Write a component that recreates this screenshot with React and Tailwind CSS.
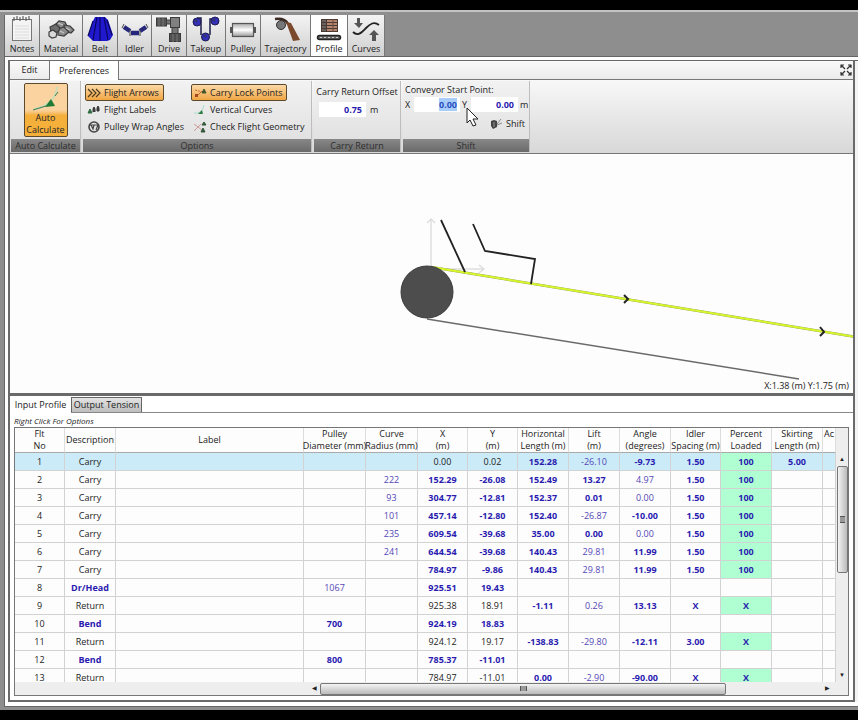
import React, { useEffect, useRef, useState } from "react";
import clsx from "clsx";

const NotesIcon = () => (
    <svg width="28" height="28" viewBox="0 0 28 28">
        <rect x="4.500" y="4.500" width="19" height="21" fill="#f4f4f4" stroke="#777" />
        <path d="M6 2v4M9 1v4M12 2v4M15 1v4M18 2v4M21 1v4" stroke="#444" />
        <path d="M7 11h14M7 14h14M7 17h14M7 20h14M7 23h14" stroke="#dcdcdc" />
    </svg>
);

const MaterialIcon = () => (
    <svg width="28" height="28" viewBox="0 0 28 28" fill="#8a8a8a" stroke="#3d3d3d" strokeWidth="1.200">
        <path d="M8 10l4-4 6 1 2 4-5 4-6-1z" />
        <path d="M17 10l6 1 4 4-3 3-7-2z" />
        <path d="M11 14l6-2 5 5-5 4-6-1z" />
        <path d="M3 12l6-3 4 4-2 4-7 0z" fill="#6e6e6e" />
        <path d="M2 17l4-2 4 3-1 4-4 1-3-2z" fill="#d8d8d8" />
        <path d="M11 8l5 2M19 13l4 2M13 16l4 2" stroke="#c8c8c8" />
    </svg>
);

const BeltIcon = () => (
    <svg width="28" height="28" viewBox="0 0 28 28">
        <path d="M9 2h10l3 3 5 15-3 5-3 1H7l-5-5L7 6z" fill="#1f18cc" />
        <path d="M11 2L7 25M14 2v24M18 2l4 23M7 6L2 21M21 5l5 15" stroke="#0a075e" strokeWidth="1.200" fill="none" />
    </svg>
);

const IdlerIcon = () => (
    <svg width="28" height="28" viewBox="0 0 28 28">
        <path d="M3 12l6 4M10 18h8M19 16l6-4" stroke="#26267a" strokeWidth="4.500" />
        <path d="M1 13l2-4M9 15v6M19 15v6M25 9l2 4" stroke="#444" />
    </svg>
);

const DriveIcon = () => (
    <svg width="28" height="28" viewBox="0 0 28 28" stroke="#3b3b3b">
        <rect x="1.500" y="3" width="10" height="8" fill="#555" />
        <rect x="11.500" y="5" width="5" height="4" fill="#777" />
        <rect x="15.500" y="2.500" width="9" height="10" fill="#808080" />
        <rect x="17" y="12.500" width="6" height="6" fill="#777" />
        <rect x="14.500" y="18.500" width="11" height="8" fill="#505050" />
        <path d="M4 3v8M8 3v8M18 19v8M22 19v8" stroke="#777" />
    </svg>
);

const TakeupIcon = () => (
    <svg width="28" height="28" viewBox="0 0 28 28" stroke="#1d1d50">
        <path d="M5 3h4v17M18 20V4h6" fill="none" strokeWidth="1.500" />
        <circle cx="5" cy="7" r="4" fill="#3430b8" />
        <circle cx="23" cy="6" r="4" fill="#3430b8" />
        <circle cx="13.500" cy="22" r="4" fill="#3430b8" />
        <circle cx="4" cy="6" r="1" fill="#aab" />
        <circle cx="22" cy="5" r="1" fill="#aab" />
        <circle cx="13" cy="21" r="1" fill="#aab" />
    </svg>
);

const PulleyIcon = () => (
    <svg width="28" height="28" viewBox="0 0 28 28">
        <defs>
            <linearGradient id="drum" x2="0" y2="1">
                <stop stopColor="#aaa" />
                <stop offset="0.500" stopColor="#fff" />
                <stop offset="1" stopColor="#999" />
            </linearGradient>
        </defs>
        <path d="M1 12h26v6H1z" fill="#555" />
        <rect x="3.500" y="8.500" width="21" height="13" fill="url(#drum)" stroke="#555" strokeWidth="1.200" />
    </svg>
);

const TrajectoryIcon = () => (
    <svg width="28" height="28" viewBox="0 0 28 28">
        <path d="M3 4c7-1 11 1 13 5" fill="none" stroke="#3c2a22" strokeWidth="2.500" />
        <path d="M14 7l5 1 9 17-7 1z" fill="#7b4a2c" />
        <circle cx="9" cy="10" r="4.500" fill="#777" stroke="#333" />
    </svg>
);

const ProfileIcon = () => (
    <svg width="28" height="28" viewBox="0 0 28 28">
        <rect x="6" y="4" width="17" height="13" fill="#4a3a34" />
        <path d="M12 6h10M12 9h10M12 12h10M12 15h10" stroke="#d9a080" strokeWidth="1.500" />
        <path d="M7 6h4M7 9h4M7 12h4M7 15h4" stroke="#8a8a8a" />
        <path d="M18 4v13" stroke="#6a4a3a" />
        <rect x="2.500" y="20.500" width="23" height="4" rx="2" fill="#666" stroke="#222" strokeWidth="1.500" />
        <path d="M5 22.500h18" stroke="#ccc" strokeDasharray="2 2" />
    </svg>
);

const CurvesIcon = () => (
    <svg width="28" height="28" viewBox="0 0 28 28">
        <path d="M1 17c5 5 9 0 13-4s8-7 13-3" fill="none" stroke="#222" strokeWidth="1.800" />
        <path d="M5 3h3v5h3l-4 5-5-5h3z" fill="#555" />
        <path d="M20 26h4v-6h3l-5-5-5 5h3z" fill="#555" />
    </svg>
);

const ArrowsIcon = () => (
    <svg width="15" height="12" viewBox="0 0 15 12" fill="none" stroke="#4c3a1c" strokeWidth="1.200">
        <path d="M1 2l4 4-4 4M5 2l4 4-4 4M9 2l4 4-4 4" />
    </svg>
);

const LabelsIcon = () => (
    <svg width="15" height="12" viewBox="0 0 15 12">
        <path d="M1 9l2-4 2 4z" fill="#2c6b3c" stroke="#2c6b3c" />
        <path d="M6 8V5l1-2 1 2v3M10 7V4l1-2 1 2v3z" fill="#444" stroke="#333" />
    </svg>
);

const WrapIcon = () => (
    <svg width="15" height="12" viewBox="0 0 15 12" fill="none" stroke="#444">
        <circle cx="7" cy="6" r="5" strokeWidth="1.600" />
        <path d="M4 4l2 4 1-4M8 4h3l-2 5M3 4h8" strokeWidth="1.200" />
    </svg>
);

const LockIcon = () => (
    <svg width="15" height="12" viewBox="0 0 15 12">
        <path d="M2 3l8 2" stroke="#c06a3a" strokeDasharray="2 1" />
        <rect x="2" y="7" width="3" height="3" fill="#a34a22" />
        <path d="M5 8l4-4" stroke="#c06a3a" />
        <path d="M9 6l2-4 2 4z" fill="#41562c" stroke="#41562c" />
    </svg>
);

const VerticalCurvesIcon = () => (
    <svg width="15" height="12" viewBox="0 0 15 12">
        <path d="M1 9c5 1 9-2 10-8" fill="none" stroke="#a9dccb" />
        <path d="M5 10l4-4 1 4z" fill="#2f7d4b" />
    </svg>
);

const GeometryIcon = () => (
    <svg width="15" height="12" viewBox="0 0 15 12">
        <path d="M1 10l7-7M1 3l8 6" stroke="#d09a9a" />
        <path d="M9 4l2-3 2 3zM8 11l2-4 2 4z" fill="#35593d" stroke="#35593d" />
    </svg>
);

const ShiftIcon = () => (
    <svg width="13" height="12" viewBox="0 0 13 12">
        <path d="M1 3l3-1 3 1v6l-4 2-2-3z" fill="#444" />
        <path d="M7 6l4-5M7 7l5-2" stroke="#888" />
        <path d="M4 4v5" stroke="#999" />
    </svg>
);

const CalculateIcon = () => (
    <svg width="40" height="28" viewBox="0 0 40 28">
        <path d="M8 25c12-2 22-9 23-22" fill="none" stroke="#c9dcb4" strokeWidth="2" />
        <path d="M7 26l13-4M29 12l3-4" stroke="#3f7a50" />
        <path d="M19 23l6-8 4 7z" fill="#1f7a35" />
    </svg>
);

const ExpandIcon = () => (
    <svg width="12" height="12" viewBox="0 0 12 12" fill="none" stroke="#333" strokeWidth="1.200">
        <path d="M1 4V1h3M8 1h3v3M11 8v3H8M4 11H1V8M1 1l4 4M11 1L7 5M11 11L7 7M1 11l4-4" />
    </svg>
);

const modules = [
    { name: "Notes", icon: NotesIcon, width: "w-[35px]" },
    { name: "Material", icon: MaterialIcon, width: "w-[43px]" },
    { name: "Belt", icon: BeltIcon, width: "w-[35px]" },
    { name: "Idler", icon: IdlerIcon, width: "w-[34px]" },
    { name: "Drive", icon: DriveIcon, width: "w-[35px]" },
    { name: "Takeup", icon: TakeupIcon, width: "w-[39px]" },
    { name: "Pulley", icon: PulleyIcon, width: "w-[35px]" },
    { name: "Trajectory", icon: TrajectoryIcon, width: "w-[50px]" },
    { name: "Profile", icon: ProfileIcon, width: "w-[37px]" },
    { name: "Curves", icon: CurvesIcon, width: "w-[37px]" },
];

const columns = [
    { title: ["Flt", "No"], width: "w-[50px]" },
    { title: ["Description"], width: "w-[51px]" },
    { title: ["Label"], width: "" },
    { title: ["Pulley", "Diameter (mm)"], width: "w-[62px]" },
    { title: ["Curve", "Radius (mm)"], width: "w-[52px]" },
    { title: ["X", "(m)"], width: "w-[50px]" },
    { title: ["Y", "(m)"], width: "w-[50px]" },
    { title: ["Horizontal", "Length (m)"], width: "w-[51px]" },
    { title: ["Lift", "(m)"], width: "w-[51px]" },
    { title: ["Angle", "(degrees)"], width: "w-[51px]" },
    { title: ["Idler", "Spacing (m)"], width: "w-[50px]" },
    { title: ["Percent", "Loaded"], width: "w-[51px]" },
    { title: ["Skirting", "Length (m)"], width: "w-[51px]" },
    { title: ["Ac", ""], width: "w-[13px]" },
];

// "*" marks an editable value (bold blue), "~" a calculated one (light blue)
const flights = [
    ["1", "Carry", "", "", "", "0.00", "0.02", "*152.28", "~-26.10", "*-9.73", "*1.50", "*100", "*5.00", ""],
    ["2", "Carry", "", "", "~222", "*152.29", "*-26.08", "*152.49", "*13.27", "~4.97", "*1.50", "*100", "", ""],
    ["3", "Carry", "", "", "~93", "*304.77", "*-12.81", "*152.37", "*0.01", "~0.00", "*1.50", "*100", "", ""],
    ["4", "Carry", "", "", "~101", "*457.14", "*-12.80", "*152.40", "~-26.87", "*-10.00", "*1.50", "*100", "", ""],
    ["5", "Carry", "", "", "~235", "*609.54", "*-39.68", "*35.00", "*0.00", "~0.00", "*1.50", "*100", "", ""],
    ["6", "Carry", "", "", "~241", "*644.54", "*-39.68", "*140.43", "~29.81", "*11.99", "*1.50", "*100", "", ""],
    ["7", "Carry", "", "", "", "*784.97", "*-9.86", "*140.43", "~29.81", "*11.99", "*1.50", "*100", "", ""],
    ["8", "*Dr/Head", "", "~1067", "", "*925.51", "*19.43", "", "", "", "", "", "", ""],
    ["9", "Return", "", "", "", "925.38", "18.91", "*-1.11", "~0.26", "*13.13", "*X", "*X", "", ""],
    ["10", "*Bend", "", "*700", "", "*924.19", "*18.83", "", "", "", "", "", "", ""],
    ["11", "Return", "", "", "", "924.12", "19.17", "*-138.83", "~-29.80", "*-12.11", "*3.00", "*X", "", ""],
    ["12", "*Bend", "", "*800", "", "*785.37", "*-11.01", "", "", "", "", "", "", ""],
    ["13", "Return", "", "", "", "784.97", "-11.01", "*0.00", "~-2.90", "*-90.00", "*X", "*X", "", ""],
];

const LOADED = 11;

const RibbonGroup = ({ title, className, children }) => (
    <section className={clsx("flex flex-col border-r border-[#bdbdbd] bg-linear-to-b from-[#f2f2f2] to-[#dedede]", className)}>
        <div className="flex-1">{children}</div>
        <h2 className="h-[13px] bg-linear-to-b from-[#888] to-[#6a6a6a] text-center leading-[13px] text-[#2e2e2e]">{title}</h2>
    </section>
);

const ToggleOption = ({ icon: Icon, label, initial = false }) => {
    const [on, setOn] = useState(initial);
    return (
        <button
            type="button"
            aria-pressed={on}
            onClick={() => setOn(!on)}
            className={clsx(
                "flex h-[17px] items-center gap-[2px] rounded-xs border px-px whitespace-nowrap",
                on ? "border-[#5c4a2c] bg-linear-to-b from-[#fbd9a4] to-[#f0a640] pr-1" : "border-transparent"
            )}
        >
            <Icon />
            {label}
        </button>
    );
};

const ConveyorView = () => (
    <div className="relative h-[239px] shrink-0 bg-[#fdfdfd]">
        <svg className="block h-full w-full" fill="none">
            <path d="M421 114V66M417 69l4-4 4 4M421 115h53M469 111l5 4-5 4" stroke="#dedede" strokeWidth="1.500" />
            <path d="M417 165L789 225" stroke="#6a6a6a" strokeWidth="1.500" />
            <path d="M421 113L846 183" stroke="#8f9a50" strokeWidth="2.500" />
            <path d="M421 113L846 183" stroke="#d8f62c" strokeWidth="2" />
            <path d="M431 66L455 118M463 70L475 97L525 105L521 130" stroke="#222" strokeWidth="1.800" />
            <circle cx="417" cy="138" r="26" fill="#4d4d4d" stroke="#3c3c3c" />
            <path d="M614 141l4 4-4 4M810 173l4 5-4 4" stroke="#222" strokeWidth="2" />
        </svg>
        <output className="absolute right-1 bottom-0 leading-[14px]">X:1.38 (m) Y:1.75 (m)</output>
    </div>
);

const FlightTable = () => (
    <div className="flex min-h-0 flex-1 flex-col border border-[#777] bg-[#eee]">
        <div className="flex min-h-0 flex-1">
            <div className="min-w-0 flex-1 overflow-hidden">
                <table className="w-full table-fixed border-separate border-spacing-0 bg-[#fdfdfd] text-center">
                    <colgroup>
                        {columns.map((column) => (
                            <col key={column.title[0]} className={column.width} />
                        ))}
                    </colgroup>
                    <thead>
                        <tr className="h-[25px]">
                            {columns.map((column) => (
                                <th
                                    key={column.title[0]}
                                    className="border-r border-b border-r-[#ddd] border-b-[#aaa] p-0 leading-3 font-normal whitespace-nowrap"
                                >
                                    <div className="flex flex-col items-center">
                                        {column.title.map((line) => (
                                            <span key={line} className="min-h-3">
                                                {line}
                                            </span>
                                        ))}
                                    </div>
                                </th>
                            ))}
                        </tr>
                    </thead>
                    <tbody>
                        {flights.map((flight, index) => (
                            <tr key={flight[0]} className={clsx("h-[18px]", index === 0 && "bg-[#cbebf8]")}>
                                {flight.map((value, col) => (
                                    <td
                                        key={columns[col].title[0]}
                                        className={clsx(
                                            "border-r border-b border-[#d2d2d2] p-0 leading-4",
                                            value[0] === "*" && "font-bold text-[#2a1bb0]",
                                            value[0] === "~" && "text-[#5347b8]",
                                            col === LOADED && value && "bg-[#b0ffd2]"
                                        )}
                                    >
                                        {value.replace(/^[*~]/, "")}
                                    </td>
                                ))}
                            </tr>
                        ))}
                    </tbody>
                </table>
            </div>
            {/* Vertical scrollbar */}
            <div className="flex w-[12px] flex-col items-center pt-[25px] text-[6px]">
                <span className="h-[13px] leading-[13px]">▲</span>
                <div className="flex h-[107px] w-[11px] items-center justify-center rounded-xs border border-[#777] bg-linear-to-r from-[#f4f4f4] to-[#bbb]">
                    <div className="h-[7px] w-[5px] border-y border-[#555] bg-[#999]" />
                </div>
                <span className="mt-auto h-[13px] leading-[13px]">▼</span>
            </div>
        </div>
        {/* Horizontal scrollbar */}
        <div className="flex h-[13px] shrink-0 items-center pr-[18px] pl-[294px] text-[6px]">
            <span className="w-[11px] text-center">◀</span>
            <div className="flex h-[12px] w-[78%] items-center justify-center rounded-xs border border-[#777] bg-linear-to-b from-[#f4f4f4] to-[#bbb]">
                <div className="h-[5px] w-[7px] border-x border-[#555] bg-[#999]" />
            </div>
            <span className="ml-auto">▶</span>
        </div>
    </div>
);

const App = () => {
    const [activeModule, setActiveModule] = useState("Profile");
    const startX = useRef(null);

    useEffect(() => {
        startX.current.focus();
        startX.current.select();
    }, []);

    return (
        <div className="flex h-screen flex-col bg-black py-[10px] font-['Open_Sans','Noto_Sans',sans-serif] text-[9px] text-[#222]">
            <div className="flex min-h-0 flex-1 flex-col border-t-2 border-[#c4c4c4] bg-[#8e8e8e] pt-[3px] pb-[3px] pl-[4px]">
                {/* Module toolbar */}
                <nav className="flex h-[41px] shrink-0 border-l border-[#666]">
                    {modules.map(({ name, icon: Icon, width }) => (
                        <button
                            key={name}
                            type="button"
                            onClick={() => setActiveModule(name)}
                            className={clsx(
                                "flex flex-col items-center border-r border-[#777]",
                                width,
                                activeModule === name ? "bg-white" : "bg-linear-to-b from-[#f4f4f4] to-[#cfcfcf]"
                            )}
                        >
                            <Icon />
                            <span className="leading-3">{name}</span>
                        </button>
                    ))}
                </nav>

                <div className="flex min-h-0 flex-1 border-y border-l border-[#666] bg-white pt-[3px] pb-[4px] pl-[3px]">
                    <main className="flex min-h-0 min-w-0 flex-1 flex-col border-t border-r-2 border-b-2 border-l-2 border-[#6a6a6a]">
                        {/* Ribbon tabs */}
                        <div className="flex h-[19px] shrink-0 border-b border-[#777] bg-linear-to-b from-[#fafafa] to-[#ebebeb]">
                            <button type="button" className="w-[39px]">
                                Edit
                            </button>
                            <button type="button" className="-mb-px w-[70px] border-x border-[#777] bg-white">
                                Preferences
                            </button>
                            <button type="button" aria-label="Expand" className="mr-px ml-auto">
                                <ExpandIcon />
                            </button>
                        </div>

                        {/* Ribbon */}
                        <div className="flex shrink-0 gap-[2px] border-b border-[#777] bg-linear-to-b from-[#f8f8f8] to-[#d8d8d8] p-px">
                            <RibbonGroup title="Auto Calculate" className="h-[71px] w-[70px]">
                                <button
                                    type="button"
                                    aria-pressed="true"
                                    className="mx-auto mt-[2px] flex w-[44px] flex-col items-center overflow-hidden rounded-xs border border-[#5c4a2c] bg-linear-to-b from-[#fbd3a0] from-50% to-[#f5b03c] to-60% text-center"
                                >
                                    <CalculateIcon />
                                    <span className="h-[24px] leading-3">Auto Calculate</span>
                                </button>
                            </RibbonGroup>
                            <RibbonGroup title="Options" className="w-[229px]">
                                <div className="flex gap-[2px] px-[2px] pt-[3px]">
                                    <div className="flex w-[104px] flex-col items-start">
                                        <ToggleOption icon={ArrowsIcon} label="Flight Arrows" initial />
                                        <ToggleOption icon={LabelsIcon} label="Flight Labels" />
                                        <ToggleOption icon={WrapIcon} label="Pulley Wrap Angles" />
                                    </div>
                                    <div className="flex flex-col items-start">
                                        <ToggleOption icon={LockIcon} label="Carry Lock Points" initial />
                                        <ToggleOption icon={VerticalCurvesIcon} label="Vertical Curves" />
                                        <ToggleOption icon={GeometryIcon} label="Check Flight Geometry" />
                                    </div>
                                </div>
                            </RibbonGroup>
                            <RibbonGroup title="Carry Return" className="w-[87px]">
                                <label htmlFor="offset" className="block pt-[3px] text-center leading-4 whitespace-nowrap">
                                    Carry Return Offset
                                </label>
                                <div className="mt-[2px] flex items-center gap-1 pl-[5px]">
                                    <input
                                        id="offset"
                                        defaultValue="0.75"
                                        className="h-[15px] w-[47px] bg-white pr-1 text-right font-bold text-[#2a1bb0] outline-none"
                                    />
                                    m
                                </div>
                            </RibbonGroup>
                            <RibbonGroup title="Shift" className="w-[127px]">
                                <div className="px-[2px] pt-[2px] leading-[14px]">Conveyor Start Point:</div>
                                <div className="flex items-center gap-[2px] pl-[2px]">
                                    <label htmlFor="start-x" className="w-[7px]">
                                        X
                                    </label>
                                    <input
                                        id="start-x"
                                        ref={startX}
                                        defaultValue="0.00"
                                        className="h-[15px] w-[46px] bg-white pr-[3px] text-right font-bold text-[#2a1bb0] outline-none selection:bg-[#a9cdfb] selection:text-[#2a4fc0]"
                                    />
                                    <label htmlFor="start-y" className="relative w-[7px]">
                                        Y
                                        {/* Mouse pointer */}
                                        <svg className="absolute top-[9px] left-[4px]" width="13" height="20" viewBox="0 0 13 20">
                                            <path d="M1 1v15l3-3 3 6 3-1-3-6h5z" fill="#fff" stroke="#222" />
                                        </svg>
                                    </label>
                                    <input
                                        id="start-y"
                                        defaultValue="0.00"
                                        className="h-[15px] w-[47px] bg-white pr-1 text-right font-bold text-[#2a1bb0] outline-none"
                                    />
                                    m
                                </div>
                                <button type="button" className="mt-[5px] mr-1 ml-auto flex items-center gap-[3px]">
                                    <ShiftIcon />
                                    Shift
                                </button>
                            </RibbonGroup>
                        </div>

                        <ConveyorView />

                        {/* Flight profile */}
                        <div className="flex min-h-0 flex-1 flex-col border-t-[3px] border-[#6a6a6a] bg-white">
                            <div className="flex h-[17px] shrink-0 border-b border-[#888] pt-px whitespace-nowrap">
                                <button type="button" className="-mb-px w-[61px] bg-white">
                                    Input Profile
                                </button>
                                <button
                                    type="button"
                                    className="w-[71px] border border-b-0 border-[#666] bg-linear-to-b from-[#e4e4e4] to-[#bdbdbd]"
                                >
                                    Output Tension
                                </button>
                            </div>
                            <div className="flex min-h-0 flex-1 flex-col pr-[4px] pb-[4px] pl-[4px]">
                                <p className="pt-[2px] text-[8px] leading-3 italic">Right Click For Options</p>
                                <FlightTable />
                            </div>
                        </div>
                    </main>
                    {/* Edge of the neighbouring pane */}
                    <div className="w-[3px] border-t border-[#6a6a6a] bg-[#f4f4f4]" />
                </div>
            </div>
        </div>
    );
};

export default App;
